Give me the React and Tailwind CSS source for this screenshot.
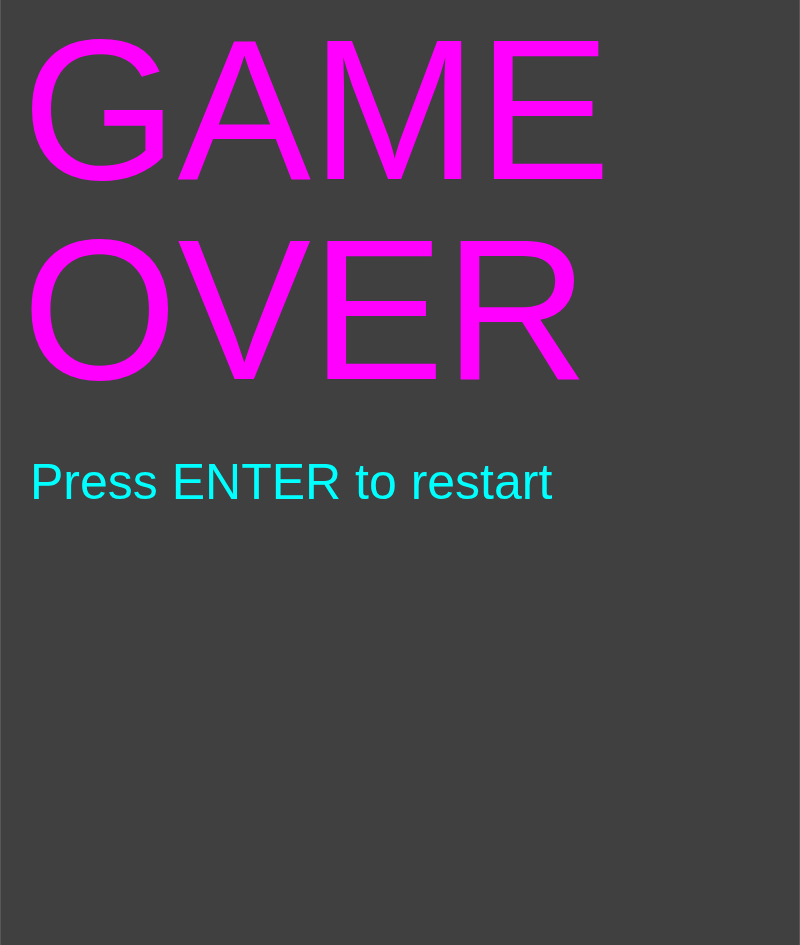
export default function App() {
  return (
    <div
      className="h-[945px] w-[800px] border-x border-[#585858] bg-[#404040] pl-[21px] pt-[10px]"
      style={{ fontFamily: '"Liberation Sans", Arial, sans-serif' }}
    >
      <h1 className="text-[200px] leading-[200px] text-[#ff00ff]">
        GAME
        <br />
        OVER
      </h1>
      <p className="mt-[47px] pl-[8px] text-[50px] leading-none text-[#00ffff]">
        Press ENTER to restart
      </p>
    </div>
  );
}
